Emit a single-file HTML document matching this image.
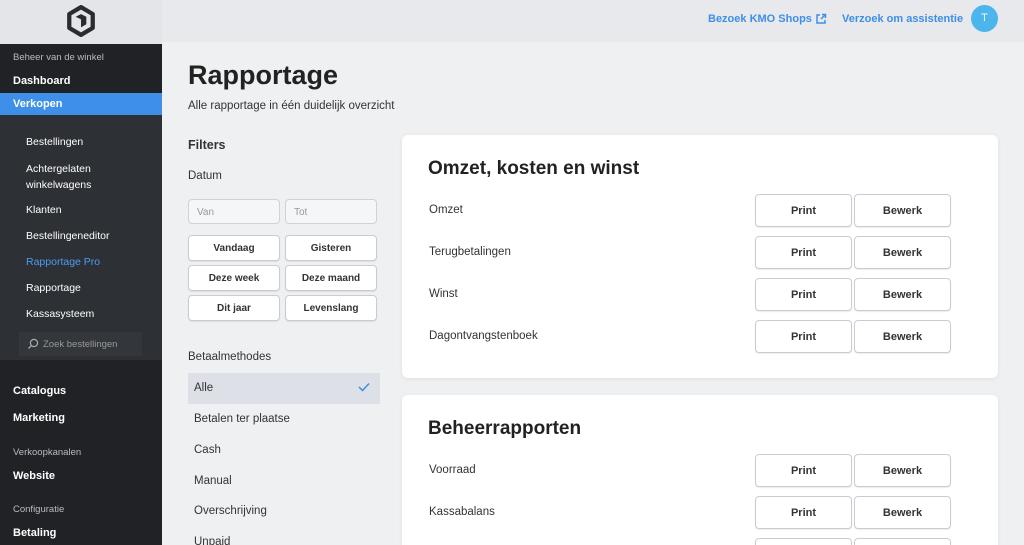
<!DOCTYPE html>
<html style="overflow:hidden;height:545px"><head><meta charset="utf-8"><style>
*{margin:0;padding:0;box-sizing:border-box}
body{width:1024px;height:545px;overflow:hidden;background:#eff0f2;font-family:"Liberation Sans",sans-serif;position:relative;color:#222}
.sb{position:absolute;left:0;top:0;width:162px;height:545px;background:#202226}
.logo{height:44px;background:#e3e5e8;position:relative}
.abs{position:absolute;white-space:nowrap}
.sb .t{color:#fff;font-size:11px;font-weight:bold;left:13px}
.sb .h{color:#b8bcc2;font-size:9.5px;left:13px}
.sb .s{color:#fff;font-size:10.5px;left:26px}
.top{position:absolute;left:162px;top:0;right:0;height:42px;background:#e8e9ec}
.btn{position:absolute;background:#fff;border:1px solid #c9ccd2;border-radius:4px;font-size:11px;font-weight:bold;color:#333;text-align:center;box-shadow:0 1px 1px rgba(0,0,0,.08)}
.card{position:absolute;left:402px;width:596px;background:#fff;border-radius:6px;box-shadow:0 1px 4px rgba(0,0,0,.07);overflow:hidden}
.lbl{position:absolute;left:27px;font-size:11.5px;color:#333}
.pm{position:absolute;left:194px;font-size:11.5px;color:#333}
</style></head><body>
<div class="sb">
 <div class="logo"><svg class="abs" style="left:66px;top:5px" width="30" height="32" viewBox="0 0 28 30"><path d="M14 2 L25 8.5 V21.5 L14 28 L3 21.5 V8.5 Z" fill="none" stroke="#2a2c30" stroke-width="4" stroke-linejoin="round"/><path d="M9 11 L14 8.5 L19 11 V18 L14 21 V13.5 Z" fill="#2a2c30"/></svg></div>
 <div class="abs h" style="top:52px">Beheer van de winkel</div>
 <div class="abs t" style="top:75px">Dashboard</div>
 <div class="abs" style="left:0;top:93px;width:162px;height:22px;background:#3d8fe8"></div>
 <div class="abs t" style="top:98px">Verkopen</div>
 <div class="abs" style="left:0;top:115px;width:162px;height:245px;background:#2d3035"></div>
 <div class="abs s" style="top:136px">Bestellingen</div>
 <div class="abs s" style="top:161px;line-height:16px">Achtergelaten<br>winkelwagens</div>
 <div class="abs s" style="top:204px">Klanten</div>
 <div class="abs s" style="top:230px">Bestellingeneditor</div>
 <div class="abs s" style="top:256px;color:#4d9cf0">Rapportage Pro</div>
 <div class="abs s" style="top:282px">Rapportage</div>
 <div class="abs s" style="top:308px">Kassasysteem</div>
 <div class="abs" style="left:19px;top:332px;width:123px;height:24px;background:#33363b"></div>
 <svg class="abs" style="left:27px;top:338px" width="12" height="12" viewBox="0 0 12 12"><circle cx="7" cy="5" r="3.6" fill="none" stroke="#aaa" stroke-width="1.2"/><path d="M4.3 7.7 L1.5 10.5" stroke="#aaa" stroke-width="1.3"/></svg>
 <div class="abs" style="left:43px;top:339px;font-size:9.5px;color:#999">Zoek bestellingen</div>
 <div class="abs t" style="top:385px">Catalogus</div>
 <div class="abs t" style="top:412px">Marketing</div>
 <div class="abs h" style="top:447px">Verkoopkanalen</div>
 <div class="abs t" style="top:470px">Website</div>
 <div class="abs h" style="top:504px">Configuratie</div>
 <div class="abs t" style="top:527px">Betaling</div>
</div>
<div class="top">
 <div class="abs" style="left:546px;top:13px;font-size:11px;color:#3d8fe8;font-weight:bold">Bezoek KMO Shops</div>
 <svg class="abs" style="left:653px;top:13px" width="12" height="12" viewBox="0 0 12 12"><path d="M5 2H2V10H10V7M6 6L10.5 1.5M7 1.5H10.5V5" fill="none" stroke="#3d8fe8" stroke-width="1.5"/></svg>
 <div class="abs" style="left:680px;top:13px;font-size:11px;color:#3d8fe8;font-weight:bold">Verzoek om assistentie</div>
 <div class="abs" style="left:809px;top:5px;width:27px;height:27px;border-radius:50%;background:#4cb5ec;color:#fff;font-size:11px;text-align:center;line-height:27px">T</div>
</div>
<div class="abs" style="left:188px;top:60px;font-size:27px;font-weight:bold;color:#222">Rapportage</div>
<div class="abs" style="left:188px;top:100px;font-size:11.5px;color:#333">Alle rapportage in één duidelijk overzicht</div>
<div class="abs" style="left:188px;top:138px;font-size:12.5px;font-weight:bold;color:#333">Filters</div>
<div class="abs" style="left:188px;top:170px;font-size:11.5px;color:#333">Datum</div>
<div class="abs" style="left:188px;top:199px;width:92px;height:25px;border:1px solid #cfd2d7;border-radius:4px;background:#f5f6f7;font-size:10px;color:#999;padding:7px 8px">Van</div>
<div class="abs" style="left:285px;top:199px;width:92px;height:25px;border:1px solid #cfd2d7;border-radius:4px;background:#f5f6f7;font-size:10px;color:#999;padding:7px 8px">Tot</div>
<div class="btn" style="left:188px;top:235px;width:92px;height:26px;line-height:26px;font-size:10px">Vandaag</div>
<div class="btn" style="left:285px;top:235px;width:92px;height:26px;line-height:26px;font-size:10px">Gisteren</div>
<div class="btn" style="left:188px;top:265px;width:92px;height:26px;line-height:26px;font-size:10px">Deze week</div>
<div class="btn" style="left:285px;top:265px;width:92px;height:26px;line-height:26px;font-size:10px">Deze maand</div>
<div class="btn" style="left:188px;top:295px;width:92px;height:26px;line-height:26px;font-size:10px">Dit jaar</div>
<div class="btn" style="left:285px;top:295px;width:92px;height:26px;line-height:26px;font-size:10px">Levenslang</div>
<div class="abs" style="left:188px;top:351px;font-size:11.5px;color:#333">Betaalmethodes</div>
<div class="abs" style="left:188px;top:373px;width:192px;height:31px;background:#dde1e7"></div>
<svg class="abs" style="left:358px;top:382px" width="12" height="10" viewBox="0 0 12 10"><path d="M1 5L4.5 8.5L11 1.5" fill="none" stroke="#3d8fe8" stroke-width="1.5"/></svg>
<div class="pm" style="top:382px">Alle</div>
<div class="pm" style="top:413px">Betalen ter plaatse</div>
<div class="pm" style="top:444px">Cash</div>
<div class="pm" style="top:475px">Manual</div>
<div class="pm" style="top:505px">Overschrijving</div>
<div class="pm" style="top:536px">Unpaid</div>

<div class="card" style="top:135px;height:243px">
 <div class="abs" style="left:26px;top:23px;font-size:19px;font-weight:bold;color:#222">Omzet, kosten en winst</div>
 <div class="lbl" style="top:69px">Omzet</div>
 <div class="lbl" style="top:111px">Terugbetalingen</div>
 <div class="lbl" style="top:153px">Winst</div>
 <div class="lbl" style="top:195px">Dagontvangstenboek</div>
 <div class="btn" style="left:353px;top:59px;width:97px;height:33px;line-height:33px">Print</div><div class="btn" style="left:452px;top:59px;width:97px;height:33px;line-height:33px">Bewerk</div>
 <div class="btn" style="left:353px;top:101px;width:97px;height:33px;line-height:33px">Print</div><div class="btn" style="left:452px;top:101px;width:97px;height:33px;line-height:33px">Bewerk</div>
 <div class="btn" style="left:353px;top:143px;width:97px;height:33px;line-height:33px">Print</div><div class="btn" style="left:452px;top:143px;width:97px;height:33px;line-height:33px">Bewerk</div>
 <div class="btn" style="left:353px;top:185px;width:97px;height:33px;line-height:33px">Print</div><div class="btn" style="left:452px;top:185px;width:97px;height:33px;line-height:33px">Bewerk</div>
</div>
<div class="card" style="top:395px;height:150px;border-radius:6px 6px 0 0">
 <div class="abs" style="left:26px;top:23px;font-size:19px;font-weight:bold;color:#222">Beheerrapporten</div>
 <div class="lbl" style="top:69px">Voorraad</div>
 <div class="lbl" style="top:111px">Kassabalans</div>
 <div class="btn" style="left:353px;top:59px;width:97px;height:33px;line-height:33px">Print</div><div class="btn" style="left:452px;top:59px;width:97px;height:33px;line-height:33px">Bewerk</div>
 <div class="btn" style="left:353px;top:101px;width:97px;height:33px;line-height:33px">Print</div><div class="btn" style="left:452px;top:101px;width:97px;height:33px;line-height:33px">Bewerk</div>
 <div class="btn" style="left:353px;top:143px;width:97px;height:33px"></div><div class="btn" style="left:452px;top:143px;width:97px;height:33px"></div>
</div>
</body></html>
